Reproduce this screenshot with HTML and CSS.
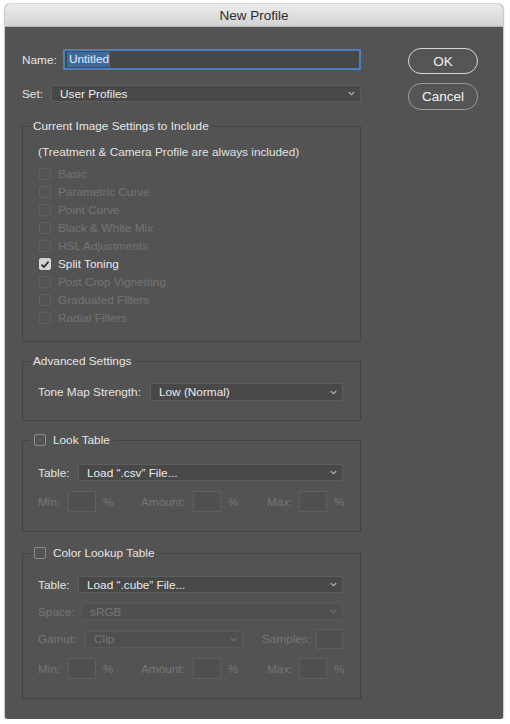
FILE: index.html
```html
<!DOCTYPE html>
<html>
<head>
<meta charset="utf-8">
<link rel="stylesheet" href="styles.css">
</head>
<body>
<div class="window">
  <div class="titlebar">New Profile</div>
  <div class="content">
    <div class="main">
      <div class="row name-row">
        <span class="lbl name-lbl">Name:</span>
        <div class="text-input"><span class="selected">Untitled</span></div>
      </div>
      <div class="row set-row">
        <span class="lbl set-lbl">Set:</span>
        <div class="select"><span>User Profiles</span><svg class="chev" width="7" height="5" viewBox="0 0 7 5"><polyline points="0.8,1 3.5,3.8 6.2,1" fill="none" stroke="#b8b8b8" stroke-width="1.1"/></svg></div>
      </div>

      <fieldset class="group g1">
        <legend>Current Image Settings to Include</legend>
        <div class="gbody">
          <div class="desc">(Treatment &amp; Camera Profile are always included)</div>
          <div class="cb-row disabled"><span class="cb"></span>Basic</div>
          <div class="cb-row disabled"><span class="cb"></span>Parametric Curve</div>
          <div class="cb-row disabled"><span class="cb"></span>Point Curve</div>
          <div class="cb-row disabled"><span class="cb"></span>Black &amp; White Mix</div>
          <div class="cb-row disabled"><span class="cb"></span>HSL Adjustments</div>
          <div class="cb-row"><span class="cb checked"><svg width="10" height="9" viewBox="0 0 10 9"><polyline points="1.5,4.6 3.9,7 8.6,1.6" fill="none" stroke="#2a2a2a" stroke-width="1.7"/></svg></span>Split Toning</div>
          <div class="cb-row disabled"><span class="cb"></span>Post Crop Vignetting</div>
          <div class="cb-row disabled"><span class="cb"></span>Graduated Filters</div>
          <div class="cb-row disabled"><span class="cb"></span>Radial Filters</div>
        </div>
      </fieldset>

      <fieldset class="group g2">
        <legend>Advanced Settings</legend>
        <div class="gbody">
          <div class="frow">
            <span class="lbl tone-lbl">Tone Map Strength:</span>
            <div class="select"><span>Low (Normal)</span><svg class="chev" width="7" height="5" viewBox="0 0 7 5"><polyline points="0.8,1 3.5,3.8 6.2,1" fill="none" stroke="#b8b8b8" stroke-width="1.1"/></svg></div>
          </div>
        </div>
      </fieldset>

      <fieldset class="group g3">
        <legend><span class="cb"></span>Look Table</legend>
        <div class="gbody">
          <div class="frow">
            <span class="lbl table-lbl">Table:</span>
            <div class="select"><span>Load “.csv” File...</span><svg class="chev" width="7" height="5" viewBox="0 0 7 5"><polyline points="0.8,1 3.5,3.8 6.2,1" fill="none" stroke="#b8b8b8" stroke-width="1.1"/></svg></div>
          </div>
          <div class="minrow">
            <span class="dlbl">Min:</span><span class="box"></span><span class="dlbl pct">%</span>
            <span class="dlbl">Amount:</span><span class="box"></span><span class="dlbl pct">%</span>
            <span class="dlbl">Max:</span><span class="box"></span><span class="dlbl pct">%</span>
          </div>
        </div>
      </fieldset>

      <fieldset class="group g4">
        <legend><span class="cb"></span>Color Lookup Table</legend>
        <div class="gbody">
          <div class="frow">
            <span class="lbl table-lbl">Table:</span>
            <div class="select"><span>Load “.cube” File...</span><svg class="chev" width="7" height="5" viewBox="0 0 7 5"><polyline points="0.8,1 3.5,3.8 6.2,1" fill="none" stroke="#b8b8b8" stroke-width="1.1"/></svg></div>
          </div>
          <div class="frow space-row">
            <span class="dlbl space-lbl">Space:</span>
            <div class="select disabled"><span>sRGB</span><svg class="chev" width="7" height="5" viewBox="0 0 7 5"><polyline points="0.8,1 3.5,3.8 6.2,1" fill="none" stroke="#6e6e6e" stroke-width="1.1"/></svg></div>
          </div>
          <div class="gamutrow">
            <span class="dlbl">Gamut:</span>
            <div class="select disabled"><span>Clip</span><svg class="chev" width="7" height="5" viewBox="0 0 7 5"><polyline points="0.8,1 3.5,3.8 6.2,1" fill="none" stroke="#6e6e6e" stroke-width="1.1"/></svg></div>
            <span></span>
            <span class="dlbl">Samples:</span>
            <span class="box"></span>
          </div>
          <div class="minrow">
            <span class="dlbl">Min:</span><span class="box"></span><span class="dlbl pct">%</span>
            <span class="dlbl">Amount:</span><span class="box"></span><span class="dlbl pct">%</span>
            <span class="dlbl">Max:</span><span class="box"></span><span class="dlbl pct">%</span>
          </div>
        </div>
      </fieldset>
    </div>

    <div class="buttons">
      <div class="btn default">OK</div>
      <div class="btn">Cancel</div>
    </div>
  </div>
</div>
</body>
</html>
```

FILE: styles.css
```css
html, body {
  margin: 0;
  padding: 0;
  background: #ffffff;
}
body {
  font-family: "Liberation Sans", Arial, sans-serif;
  font-size: 11.8px;
  color: #e4e4e4;
}
.window {
  margin: 4px 0 0 5px;
  width: 498px;
  height: 715px;
  background: #535353;
  border-radius: 5px 5px 3px 3px;
  box-shadow: 0 0 0 1px rgba(0,0,0,0.12), 0 1px 3px rgba(0,0,0,0.25);
  overflow: hidden;
}
.titlebar {
  height: 23px;
  line-height: 24px;
  text-align: center;
  font-size: 13.5px;
  color: #2b2b2b;
  background: linear-gradient(#ececec, #d3d3d3);
  border-bottom: 1px solid #b5b5b5;
  box-sizing: border-box;
}
.content {
  display: flex;
  padding: 21px 0 0 17px;
}
.main {
  width: 339px;
  display: flex;
  flex-direction: column;
}
.row {
  display: flex;
  align-items: center;
}
.name-row {
  margin-top: 1px;
  height: 21px;
}
.name-lbl { width: 41px; }
.text-input {
  flex: 1;
  height: 21px;
  box-sizing: border-box;
  border: 2px solid #4a7fc0;
  border-radius: 1px;
  background: #474747;
  display: flex;
  align-items: center;
  padding-left: 2px;
}
.selected {
  background: #3c6aa2;
  color: #e8eef7;
  padding: 0 1px 0 2px;
  line-height: 15px;
}
.set-row {
  margin-top: 15px;
  height: 17px;
}
.set-lbl { width: 29px; }
.select {
  flex: 1;
  height: 17px;
  box-sizing: border-box;
  background: #484848;
  border: 1px solid #5d5d5d;
  border-radius: 2px;
  display: flex;
  align-items: center;
  justify-content: space-between;
  padding: 0 5px 0 8px;
  color: #ececec;
}
.select.disabled {
  background: #4f4f4f;
  border-color: #595959;
  color: #767676;
}
.chev { display: block; }

.group {
  margin: 0;
  padding: 0;
  border: 1px solid #434343;
  min-width: 0;
}
.group legend {
  margin-left: 7px;
  padding: 0 3px;
  line-height: 14px;
  color: #e6e6e6;
  display: flex;
  align-items: center;
}
.g1 { margin-top: 17px; }
.g2 { margin-top: 12px; }
.g3 { margin-top: 12px; }
.g4 { margin-top: 14px; }
.gbody {
  padding: 0 17px 19px 15px;
  display: flex;
  flex-direction: column;
}
.g1 .gbody { padding-top: 10px; padding-bottom: 14px; }
.g2 .gbody { padding-top: 15px; }
.g3 .gbody { padding-top: 17px; }
.g4 .gbody { padding-top: 16px; }

.desc {
  height: 18px;
  line-height: 18px;
  margin-bottom: 4px;
  color: #e2e2e2;
}
.cb-row {
  height: 18px;
  display: flex;
  align-items: center;
  color: #e8e8e8;
}
.cb-row.disabled { color: #737373; }
.cb {
  width: 12px;
  height: 12px;
  box-sizing: border-box;
  border: 1px solid #8a8a8a;
  border-radius: 2px;
  background: #4f4f4f;
  display: inline-flex;
  align-items: center;
  justify-content: center;
}
.cb-row .cb { margin: 0 7px 0 1px; }
.cb-row.disabled .cb { border-color: #616161; background: #535353; }
.cb.checked { background: #d4d4d4; border-color: #d4d4d4; }
.group legend .cb { margin: 0 7px 0 1px; border-color: #8c8c8c; background: #535353; }

.frow {
  display: flex;
  align-items: center;
  height: 17px;
}
.g2 .frow { height: 18px; }
.g2 .select { height: 18px; }
.tone-lbl { width: 112px; }
.table-lbl { width: 40px; }
.space-row { margin-top: 10px; }
.space-lbl { width: 43px; }

.dlbl { color: #767676; }
.box {
  box-sizing: border-box;
  border: 1px solid #5e5e5e;
  background: #4f4f4f;
}
.minrow {
  margin-top: 10px;
  height: 21px;
  display: grid;
  grid-template-columns: 30px 28px 45px 52px 28px 46px 32px 28px auto;
  align-items: center;
}
.g4 .minrow { margin-top: 9px; }
.minrow .box { height: 21px; }
.minrow .pct { padding-left: 7px; }
.gamutrow {
  margin-top: 9px;
  height: 20px;
  display: grid;
  grid-template-columns: 47px 158px 19px 54px 27px;
  align-items: center;
}
.gamutrow .box { height: 20px; }

.buttons {
  margin-left: 47px;
  width: 70px;
  display: flex;
  flex-direction: column;
}
.btn {
  height: 26px;
  box-sizing: border-box;
  border: 1.5px solid #9a9a9a;
  border-radius: 13px;
  background: #555555;
  color: #f2f2f2;
  font-size: 13.5px;
  display: flex;
  align-items: center;
  justify-content: center;
}
.btn.default {
  border-color: #d8d8d8;
}
.btn + .btn { margin-top: 9px; height: 27px; }
```
